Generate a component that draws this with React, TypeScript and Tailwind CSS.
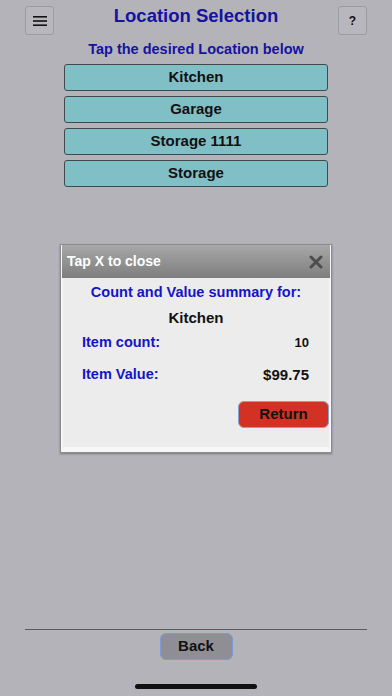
import React from "react";

const locations = ["Kitchen", "Garage", "Storage 1111", "Storage"];

export default function App() {
  return (
    <div
      className="relative w-[392px] h-[696px] bg-[#b4b3b9] overflow-hidden flex flex-col"
      style={{ fontFamily: '"Liberation Sans", Arial, sans-serif' }}
    >
      {/* Header */}
      <div className="flex items-start justify-between px-[25px] pt-[6px]">
        <button className="w-[29px] h-[29px] border border-[#9c9ba1] rounded-[3px] flex items-center justify-center bg-[#b8b7bd]">
          <svg width="14" height="12" viewBox="0 0 14 12">
            <rect x="0" y="1" width="14" height="1.6" fill="#111" />
            <rect x="0" y="5.2" width="14" height="1.6" fill="#111" />
            <rect x="0" y="9.4" width="14" height="1.6" fill="#111" />
          </svg>
        </button>
        <div className="text-[18.5px] leading-[19px] font-bold text-[#1414a0]">Location Selection</div>
        <button className="w-[29px] h-[29px] border border-[#9c9ba1] rounded-[3px] flex items-center justify-center bg-[#b8b7bd] text-[12px] font-bold text-[#111]">
          ?
        </button>
      </div>
      <div className="text-center text-[14.5px] leading-[15px] font-bold text-[#1414a0] mt-[7px]">
        Tap the desired Location below
      </div>
      <div className="flex flex-col gap-[5px] mx-[64px] mt-[7px]">
        {locations.map((l) => (
          <div
            key={l}
            className="h-[27px] bg-[#81bfc7] border border-[#3e4a4c] rounded-[3px] flex items-center justify-center text-[15px] font-bold text-[#111]"
          >
            {l}
          </div>
        ))}
      </div>

      {/* Bottom */}
      <div className="mt-auto mx-[25px] border-t border-[#5a5a5e]" />
      <div className="flex justify-center pt-[3px] pb-[36px]">
        <button className="w-[73px] h-[27px] bg-[#8f8e94] border border-[#7f9ad2] rounded-[6px] text-[15px] font-bold text-[#111] flex items-center justify-center">
          Back
        </button>
      </div>
      <div className="absolute left-[135px] top-[684px] w-[122px] h-[5px] rounded-full bg-[#111]" />

      {/* Modal */}
      <div className="absolute left-[60px] top-[244px] w-[272px] h-[209px] border border-[#8c8c8c] bg-[#f6f6f6] shadow-[0_1px_2px_rgba(0,0,0,0.35)] flex flex-col px-[1px] pb-[5px]">
        <div className="h-[33px] bg-gradient-to-b from-[#a8a8a8] to-[#7e7e7e] flex items-center justify-between pl-[5px] pr-[7px]">
          <span className="text-[14px] font-bold text-white">Tap X to close</span>
          <svg width="14" height="14" viewBox="0 0 14 14">
            <path d="M2 2 L12 12 M12 2 L2 12" stroke="#4d4d4d" strokeWidth="3" strokeLinecap="round" />
          </svg>
        </div>
        <div className="flex-1 bg-[#ececec] mx-[1px] flex flex-col">
          <div className="text-center text-[14.5px] font-bold text-[#1414c8] mt-[5px] leading-[18px]">
            Count and Value summary for:
          </div>
          <div className="text-center text-[15px] font-bold text-[#111] mt-[8px] leading-[18px]">Kitchen</div>
          <div className="flex items-center justify-between pl-[19px] pr-[20px] mt-[7px] h-[18px]">
            <span className="text-[14.5px] font-bold text-[#1414c8]">Item count:</span>
            <span className="text-[13px] font-bold text-[#111]">10</span>
          </div>
          <div className="flex items-center justify-between pl-[19px] pr-[20px] mt-[14px] h-[18px]">
            <span className="text-[14.5px] font-bold text-[#1414c8]">Item Value:</span>
            <span className="text-[15px] font-bold text-[#111]">$99.75</span>
          </div>
          <div className="flex justify-end mt-[17px]">
            <button className="w-[91px] h-[27px] bg-[#d33124] border border-[#8aa0d0] rounded-[6px] text-[15px] font-bold text-[#111] flex items-center justify-center">
              Return
            </button>
          </div>
        </div>
      </div>
    </div>
  );
}
